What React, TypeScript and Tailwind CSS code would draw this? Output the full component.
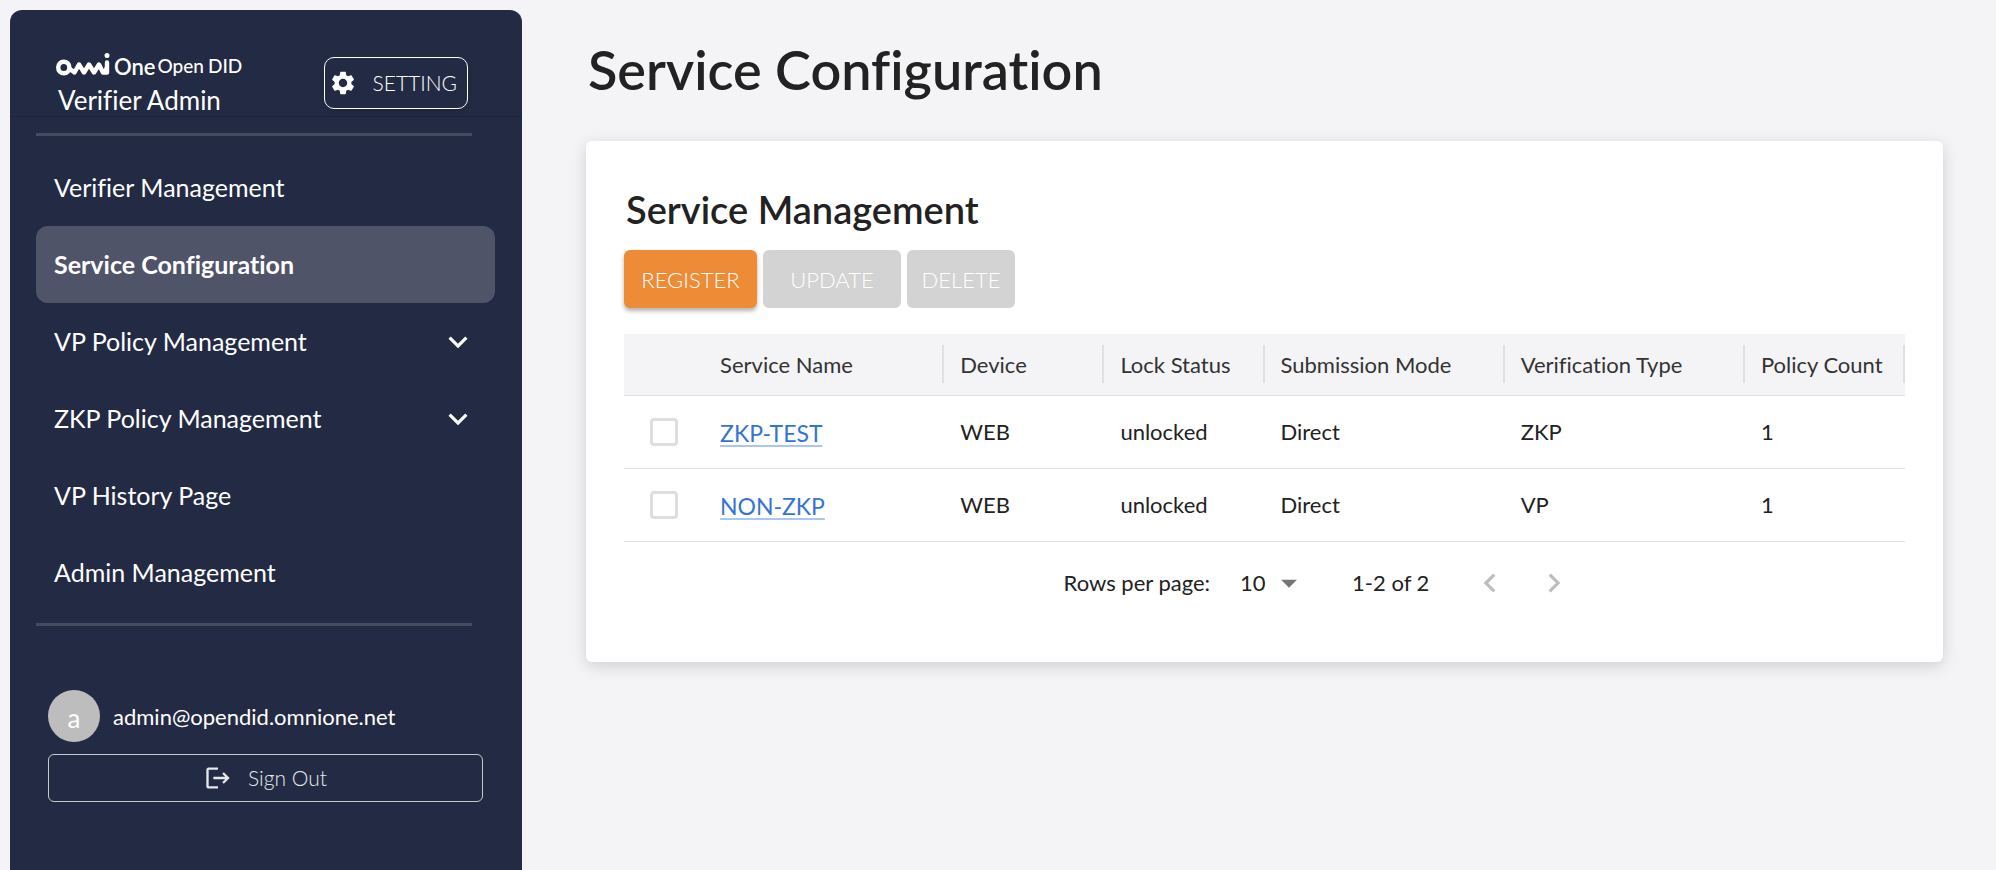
import { useState } from "react";
import { MdKeyboardArrowDown, MdLogout, MdSettings, MdChevronLeft, MdChevronRight, MdArrowDropDown } from "react-icons/md";

const navItems = [
  { label: "Verifier Management" },
  { label: "Service Configuration", active: true },
  { label: "VP Policy Management", expandable: true },
  { label: "ZKP Policy Management", expandable: true },
  { label: "VP History Page" },
  { label: "Admin Management" },
];

const columns = [
  { label: "Service Name", width: "w-[18.75%]" },
  { label: "Device", width: "w-[12.5%]" },
  { label: "Lock Status", width: "w-[12.5%]" },
  { label: "Submission Mode", width: "w-[18.75%]" },
  { label: "Verification Type", width: "w-[18.75%]" },
  { label: "Policy Count", width: "w-[12.5%]" },
];

const services = [
  { name: "ZKP-TEST", device: "WEB", lock: "unlocked", mode: "Direct", type: "ZKP", policies: 1 },
  { name: "NON-ZKP", device: "WEB", lock: "unlocked", mode: "Direct", type: "VP", policies: 1 },
];

function Logo() {
  return (
    <div className="flex h-7 items-center text-white">
      <svg viewBox="0 0 54 28" className="h-7 w-[54px]" fill="none" stroke="currentColor" aria-hidden="true">
        <ellipse cx="7.8" cy="15.5" rx="5.6" ry="5.8" strokeWidth="4.4" />
        <path d="M14 17 L18.5 20.5 L23 12.5 L28 20.5 L33 12.5 L38 20.5 L43 12.5 L47 20.5 L51 20.5 L51 10.5" strokeWidth="4.4" strokeLinejoin="round" strokeLinecap="round" />
        <path d="M47 20.5 L51 13 L51 20.5 Z" fill="currentColor" strokeWidth="2" />
        <circle cx="51" cy="3.6" r="2.5" fill="currentColor" stroke="none" />
      </svg>
      <span className="ml-1 text-[22px] font-semibold">One</span>
      <span className="ml-0.5 text-[19px] font-medium">Open</span>
      <span className="ml-1 text-[19px] font-medium">DID</span>
    </div>
  );
}

function Sidebar() {
  return (
    <aside className="flex w-[512px] shrink-0 flex-col rounded-t-xl bg-[#232b44] text-white">
      <div className="flex h-[107px] items-start justify-between border-b border-[#1e253b] pr-[54px] pl-[46px]">
        <div className="pt-[42px]">
          <Logo />
          <p className="pl-0.5 text-[26px] leading-[40px]">Verifier Admin</p>
        </div>
        <button
          type="button"
          className="mt-[47px] flex h-[52px] w-36 items-center justify-between rounded-[10px] border border-white pr-2.5 pl-1 text-[21px] font-light shadow-md"
        >
          <MdSettings className="size-7" aria-hidden="true" />
          SETTING
        </button>
      </div>
      <hr className="mt-4 mr-[50px] ml-[26px] border-t-3 border-[#464b5f]" />
      <nav className="mt-[13px] pr-[27px] pl-[26px]">
        <ul>
          {navItems.map((item) => (
            <li key={item.label}>
              <a
                href="#"
                className={
                  item.active
                    ? "flex h-[77px] items-center justify-between rounded-xl bg-[#505468] px-[18px] text-[25px] font-bold"
                    : "flex h-[77px] items-center justify-between rounded-xl px-[18px] text-[25px]"
                }
              >
                {item.label}
                {item.expandable && <MdKeyboardArrowDown className="size-[38px]" aria-hidden="true" />}
              </a>
            </li>
          ))}
        </ul>
      </nav>
      <hr className="mt-3 mr-[50px] ml-[26px] border-t-3 border-[#464b5f]" />
      <div className="mt-16 mr-[39px] ml-[38px]">
        <div className="flex items-center gap-[13px]">
          <span className="flex size-[52px] items-center justify-center rounded-full bg-[#bdbdbd] pt-1 text-[26px]">a</span>
          <span className="text-[22px]">admin@opendid.omnione.net</span>
        </div>
        <button
          type="button"
          className="mt-3 flex h-12 w-full items-center justify-center gap-4 rounded-md border border-[#c3cbd0] text-[21px] font-light text-[#e6e8ea]"
        >
          <MdLogout className="size-7" aria-hidden="true" />
          Sign Out
        </button>
      </div>
    </aside>
  );
}

function ServiceTable() {
  const [selected, setSelected] = useState<string[]>([]);
  const toggle = (name: string) =>
    setSelected((current) => (current.includes(name) ? current.filter((n) => n !== name) : [...current, name]));

  return (
    <table className="mt-[26px] w-full table-fixed border-collapse text-left text-[22px] text-[#222222]">
      <thead>
        <tr className="h-[61px] border-b border-[#e0e0e0] bg-[#f4f4f7] text-[#333333]">
          <th scope="col" aria-label="Select" className="w-[6.25%]" />
          {columns.map((column) => (
            <th key={column.label} scope="col" className={column.width + " p-0 font-normal"}>
              <div className="flex h-[38px] items-center border-r-2 border-[#e0e0e0] pl-4 whitespace-nowrap">
                {column.label}
              </div>
            </th>
          ))}
        </tr>
      </thead>
      <tbody>
        {services.map((service) => (
          <tr key={service.name} className="h-[73px] border-b border-[#e0e0e0]">
            <td className="p-0">
              <div className="flex justify-center">
                <input
                  type="checkbox"
                  aria-label={"Select " + service.name}
                  checked={selected.includes(service.name)}
                  onChange={() => toggle(service.name)}
                  className="size-7 appearance-none rounded-sm border-3 border-[#dedede] bg-white checked:bg-[#ee8b36]"
                />
              </div>
            </td>
            <td className="px-4 pt-1 pb-0 text-[23px]">
              <a href="#" className="text-[#3574d0] underline decoration-[#a9c7ee] decoration-2 underline-offset-3">
                {service.name}
              </a>
            </td>
            <td className="px-4 py-0">{service.device}</td>
            <td className="px-4 py-0">{service.lock}</td>
            <td className="px-4 py-0">{service.mode}</td>
            <td className="px-4 py-0">{service.type}</td>
            <td className="px-4 py-0">{service.policies}</td>
          </tr>
        ))}
      </tbody>
    </table>
  );
}

function Pagination() {
  return (
    <div className="flex h-[82px] items-center justify-center pl-[108px] text-[22px] text-[#222222]">
      <label htmlFor="rows-per-page">Rows per page:</label>
      <div className="relative ml-[30px] flex items-center">
        <select id="rows-per-page" defaultValue="10" className="w-14 appearance-none bg-transparent">
          <option>10</option>
          <option>25</option>
          <option>50</option>
        </select>
        <MdArrowDropDown className="pointer-events-none absolute -right-3 size-[38px] text-[#757575]" aria-hidden="true" />
      </div>
      <span className="ml-14">1-2 of 2</span>
      <button type="button" disabled aria-label="Previous page" className="ml-[42px] text-[#bdbdbd]">
        <MdChevronLeft className="size-[38px]" />
      </button>
      <button type="button" disabled aria-label="Next page" className="ml-[26px] text-[#bdbdbd]">
        <MdChevronRight className="size-[38px]" />
      </button>
    </div>
  );
}

export default function App() {
  return (
    <div className="flex min-h-screen bg-[#f4f4f7] pt-2.5 pl-2.5 font-['Lato',sans-serif] [font-variant-ligatures:no-common-ligatures]">
      <Sidebar />
      <main className="min-w-0 grow pr-[53px] pl-16">
        <h1 className="mt-[26px] pl-0.5 text-[54px] leading-[68px] font-semibold text-[#222222]">Service Configuration</h1>
        <section className="mt-[37px] rounded-md bg-white px-[38px] pt-[46px] pb-[38px] shadow-[0_4px_16px_rgba(0,0,0,0.15)]">
          <h2 className="pl-0.5 text-[38px] leading-[44px] font-semibold text-[#222222]">Service Management</h2>
          <div className="mt-[19px] flex gap-1.5 text-[22px] font-light text-white">
            <button type="button" className="h-[58px] w-[133px] rounded-md bg-[#ee8b36] shadow-[0_3px_4px_rgba(0,0,0,0.3)]">
              REGISTER
            </button>
            <button type="button" disabled className="h-[58px] w-[138px] rounded-md bg-[#d3d3d3]">
              UPDATE
            </button>
            <button type="button" disabled className="h-[58px] w-[108px] rounded-md bg-[#d3d3d3]">
              DELETE
            </button>
          </div>
          <ServiceTable />
          <Pagination />
        </section>
      </main>
    </div>
  );
}
